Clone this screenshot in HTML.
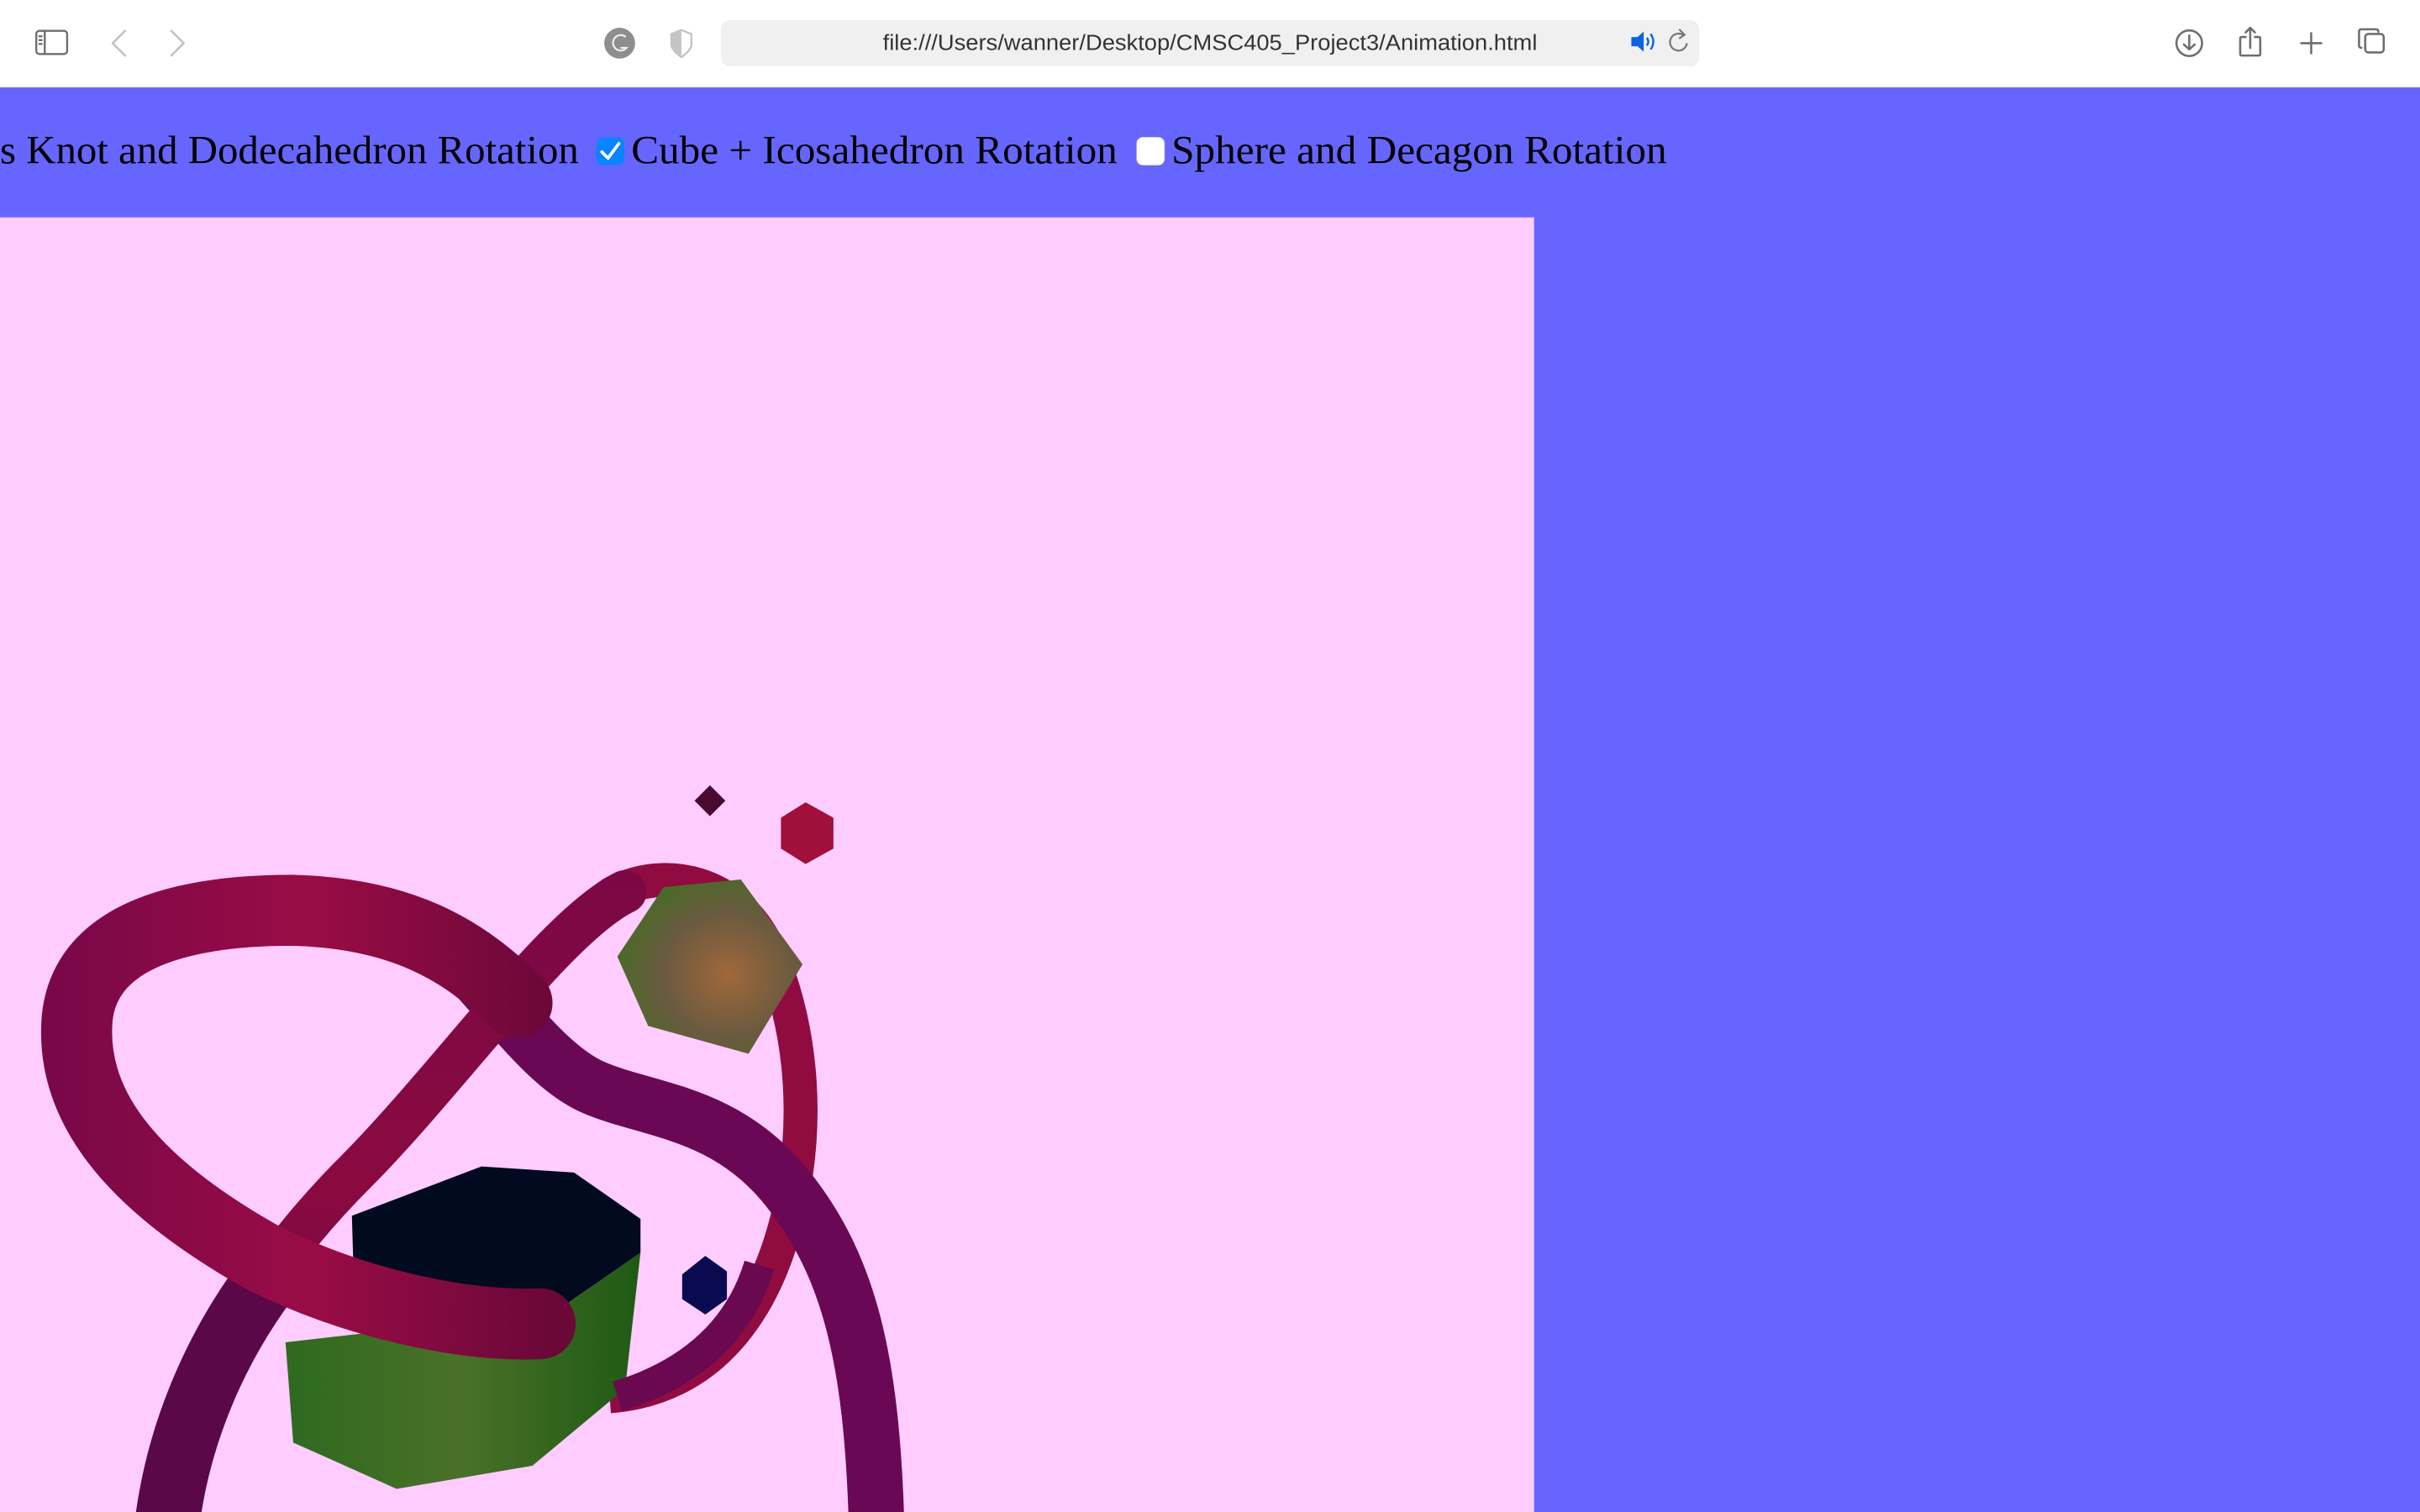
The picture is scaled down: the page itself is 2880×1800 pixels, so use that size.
<!DOCTYPE html>
<html><head><meta charset="utf-8"><style>
html,body{margin:0;padding:0;width:2880px;height:1800px;overflow:hidden;background:#fff}
svg{display:block}
</style></head><body>
<svg width="2880" height="1800" viewBox="0 0 1568 980" xmlns="http://www.w3.org/2000/svg">
<defs>
<linearGradient id="t1" gradientUnits="userSpaceOnUse" x1="0" y1="560" x2="0" y2="980">
<stop offset="0" stop-color="#7a0845"/><stop offset="0.5" stop-color="#8a0a40"/><stop offset="1" stop-color="#5a0650"/></linearGradient>
<linearGradient id="t2" gradientUnits="userSpaceOnUse" x1="40" y1="0" x2="360" y2="0">
<stop offset="0" stop-color="#7a0848"/><stop offset="0.5" stop-color="#9a0c45"/><stop offset="1" stop-color="#6a0838"/></linearGradient>
<radialGradient id="hx" cx="0.6" cy="0.55" r="0.6"><stop offset="0" stop-color="#a0683a"/><stop offset="0.6" stop-color="#6a5a40"/><stop offset="1" stop-color="#4a6a28"/></radialGradient>
<linearGradient id="gr" x1="0" x2="1"><stop offset="0" stop-color="#2e6a20"/><stop offset="0.5" stop-color="#4a7028"/><stop offset="1" stop-color="#1e5a14"/></linearGradient>
</defs>
<rect x="0" y="0" width="1568" height="56.6" fill="#ffffff"/>
<rect x="467" y="13" width="634" height="30" rx="6" fill="#f0f0f0"/>
<text x="784" y="32.5" text-anchor="middle" font-family="Liberation Sans, sans-serif" font-size="14" fill="#333" textLength="424" lengthAdjust="spacingAndGlyphs">file:///Users/wanner/Desktop/CMSC405_Project3/Animation.html</text>
<g fill="none" stroke="#6e6e6e" stroke-width="1.3" stroke-linecap="round" stroke-linejoin="round">
<rect x="23.5" y="20" width="20" height="15" rx="2"/><line x1="29" y1="20" x2="29" y2="35"/>
<line x1="25.5" y1="23.5" x2="27" y2="23.5"/><line x1="25.5" y1="26" x2="27" y2="26"/><line x1="25.5" y1="28.5" x2="27" y2="28.5"/>
</g>
<g fill="none" stroke="#c2c2c2" stroke-width="1.4" stroke-linecap="round" stroke-linejoin="round">
<path d="M81 20 L73 28 L81 36"/><path d="M111 20 L119 28 L111 36"/>
</g>
<circle cx="401.5" cy="28" r="10" fill="#8e8e8e"/>
<path d="M405.5 24 A5 5 0 1 0 406 31 L402 31" fill="none" stroke="#eee" stroke-width="1.2"/>
<path d="M441.5 19.5 L448 22 L448 30 Q446 34 441.5 37 Q437 34 435 30 L435 22 Z" fill="none" stroke="#c4c4c4" stroke-width="1.3"/>
<path d="M441.5 19.5 L435 22 L435 30 Q437 34 441.5 37 Z" fill="#c4c4c4"/>
<path d="M1057 24 L1061 24 L1065 20.5 L1065 33.5 L1061 30 L1057 30 Z" fill="#0a63e0"/>
<path d="M1067 24.5 Q1069 27 1067 29.5 M1069.5 22 Q1073 27 1069.5 32" fill="none" stroke="#0a63e0" stroke-width="1.3"/>
<path d="M1091 23 A5.5 5.5 0 1 0 1093 28" fill="none" stroke="#777" stroke-width="1.2"/><path d="M1088 19 L1091.5 22.5 L1088 25" fill="none" stroke="#777" stroke-width="1.2"/>
<g fill="none" stroke="#6e6e6e" stroke-width="1.4" stroke-linecap="round" stroke-linejoin="round">
<circle cx="1418.5" cy="28" r="8.3"/><path d="M1418.5 23 L1418.5 32 M1415 28.8 L1418.5 32 L1422 28.8"/>
<path d="M1455 24 L1452.5 24 Q1451.5 24 1451.5 25 L1451.5 35 Q1451.5 36 1452.5 36 L1463.5 36 Q1464.5 36 1464.5 35 L1464.5 25 Q1464.5 24 1463.5 24 L1461 24"/>
<path d="M1458 31 L1458 18 M1455 21 L1458 18 L1461 21"/>
<path d="M1491 28 L1504 28 M1497.5 21.5 L1497.5 34.5"/>
<rect x="1532.5" y="22" width="12" height="12" rx="2"/><path d="M1530 31 Q1528.5 31 1528.5 29.5 L1528.5 20.5 Q1528.5 19 1530 19 L1539.5 19 Q1541 19 1541 20.5"/>
</g>
<rect x="0" y="56.6" width="1568" height="923.4" fill="#6666ff"/>
<g font-family="Liberation Serif, serif" font-size="26" fill="#000">
<text x="0" y="106" textLength="375" lengthAdjust="spacingAndGlyphs">s Knot and Dodecahedron Rotation</text>
<text x="409" y="106" textLength="315" lengthAdjust="spacingAndGlyphs">Cube + Icosahedron Rotation</text>
<text x="759" y="106" textLength="321" lengthAdjust="spacingAndGlyphs">Sphere and Decagon Rotation</text>
</g>
<rect x="386.5" y="89" width="18" height="18" rx="4" fill="#0a84ff"/>
<path d="M390 98.5 L394 102.5 L401 93" fill="none" stroke="#fff" stroke-width="2" stroke-linecap="round" stroke-linejoin="round"/>
<rect x="736.5" y="89" width="18" height="18" rx="4" fill="#fff" stroke="#ccc" stroke-width="0.5"/>
<rect x="0" y="140.5" width="994" height="840" fill="#ffccff"/>
<line x1="0" y1="140.8" x2="994" y2="140.8" stroke="#9a80ff" stroke-width="0.6"/>
<!-- knot back tubes -->
<path d="M395 580 C430 560 480 570 500 620 S 525 730 510 790 S 460 900 395 905" fill="none" stroke="#900c40" stroke-width="22"/>
<path d="M290 615 C320 640 350 690 385 705 S 470 720 510 770 S 565 880 568 990" fill="none" stroke="#6a0855" stroke-width="36"/>
<path d="M108 990 C118 900 170 820 230 760 S 360 600 405 578" fill="none" stroke="url(#t1)" stroke-width="28" stroke-linecap="round"/>
<path d="M108 990 C115 930 140 870 180 820" fill="none" stroke="#5a0848" stroke-width="42"/>
<!-- prism -->
<polygon points="228,788 312,756 372,760 415,790 415,812 360,850 230,855" fill="#020a20"/>
<polygon points="185,870 360,850 415,812 405,900 345,950 257,965 190,935" fill="url(#gr)"/>
<polygon points="442,826 457,814 471,824 471,842 457,852 442,842" fill="#0a0a50"/>
<path d="M400 905 C450 890 480 860 492 820" fill="none" stroke="#6a0850" stroke-width="20"/>
<!-- front thick loop -->
<path d="M350 858 C300 860 230 845 170 815 C90 770 45 720 50 660 C55 610 110 590 190 590 C260 592 300 615 335 650" fill="none" stroke="url(#t2)" stroke-width="46" stroke-linecap="round"/>
<polygon points="400,620 430,575 480,570 520,625 485,683 420,665" fill="url(#hx)"/>
<polygon points="460,509 470,519 460,529 450,519" fill="#4a0a30"/>
<polygon points="506,530 522,520 540,530 540,550 522,560 506,550" fill="#a0103a"/>
</svg>
</body></html>
